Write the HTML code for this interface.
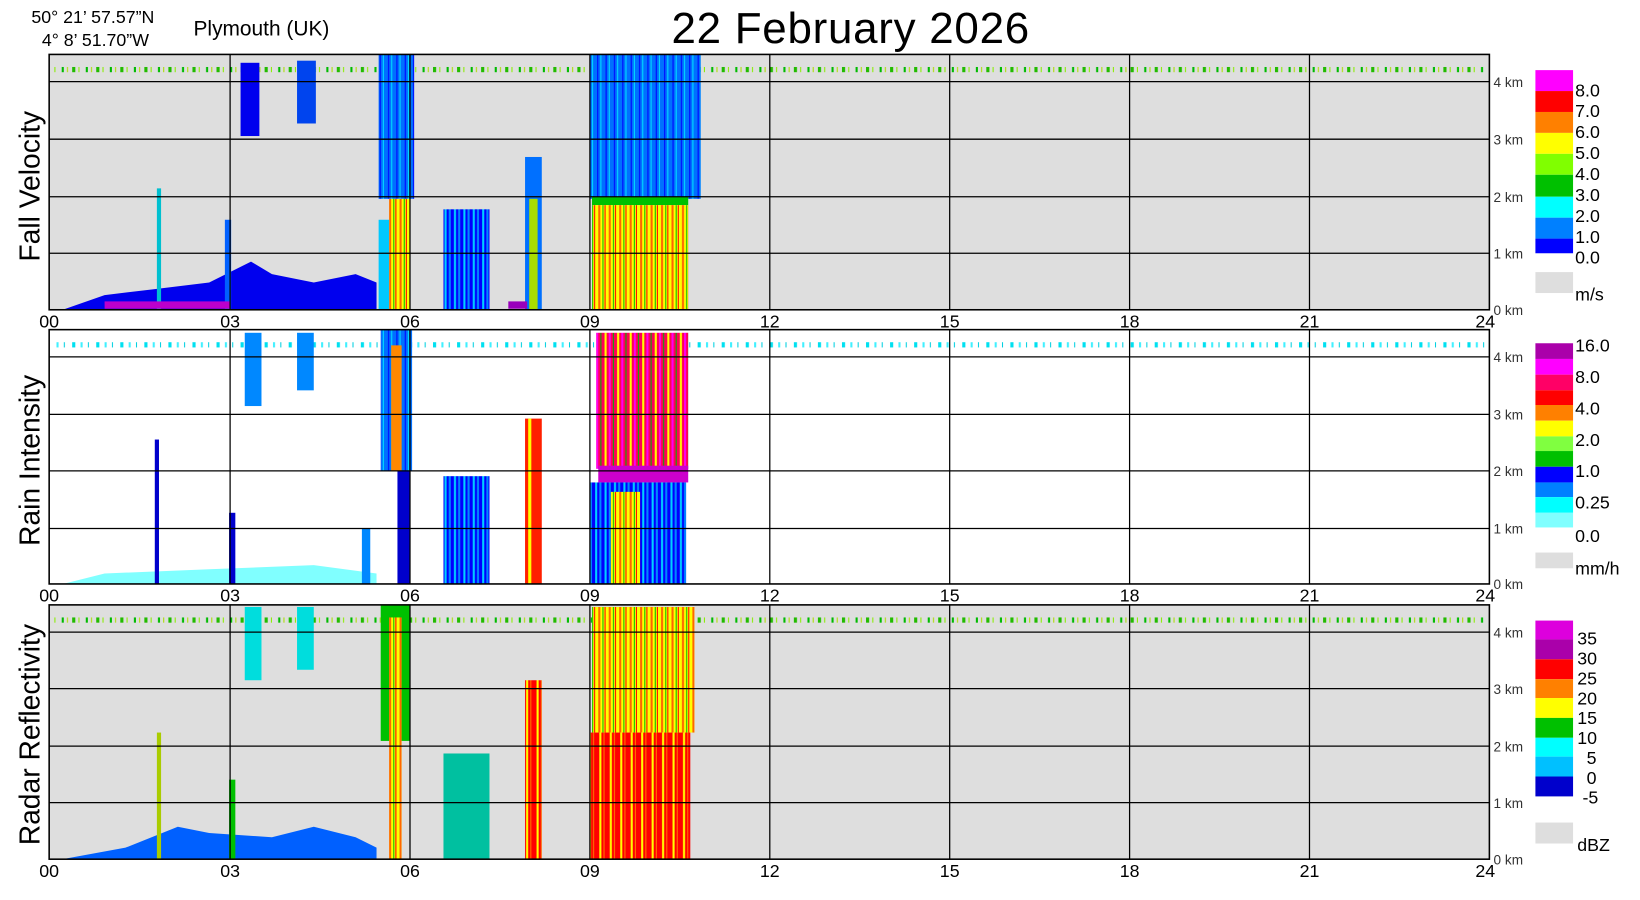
<!DOCTYPE html>
<html><head><meta charset="utf-8"><style>
html,body{margin:0;padding:0;background:#fff;width:1640px;height:900px;overflow:hidden}
svg{display:block}
text{font-family:"Liberation Sans",Arial,sans-serif}
</style></head><body>
<svg width="1640" height="900" viewBox="0 0 1568 860" preserveAspectRatio="none">
<defs>
<pattern id="g1" width="23" height="4" patternUnits="userSpaceOnUse"><rect x="0" y="0" width="3" height="4" fill="#22bb00"/><rect x="6" y="0" width="1" height="4" fill="#88ee00"/><rect x="13" y="0" width="2" height="4" fill="#00bb00"/><rect x="18" y="0" width="1" height="4" fill="#aadd00"/></pattern>
<pattern id="c1" width="23" height="4" patternUnits="userSpaceOnUse"><rect x="0" y="0" width="3" height="4" fill="#00e0f0"/><rect x="8" y="0" width="2" height="4" fill="#40f0ff"/><rect x="15" y="0" width="1" height="4" fill="#00d0e0"/></pattern>
<pattern id="yr" width="10" height="100" patternUnits="userSpaceOnUse"><rect width="10" height="100" fill="#ffff00"/><rect x="2" width="2" height="100" fill="#ff6600"/><rect x="6" width="1" height="100" fill="#00c000"/><rect x="8" width="1" height="100" fill="#ff0000"/></pattern>
<pattern id="rr" width="10" height="100" patternUnits="userSpaceOnUse"><rect width="10" height="100" fill="#ff0000"/><rect x="3" width="2" height="100" fill="#ffff00"/><rect x="7" width="1" height="100" fill="#ff7700"/></pattern>
<pattern id="ri" width="12" height="100" patternUnits="userSpaceOnUse"><rect width="12" height="100" fill="#ff0055"/><rect x="2" width="2" height="100" fill="#ffff00"/><rect x="6" width="2" height="100" fill="#ff00ee"/><rect x="10" width="1" height="100" fill="#00b000"/></pattern>
<pattern id="bl" width="8" height="100" patternUnits="userSpaceOnUse"><rect width="8" height="100" fill="#0070ff"/><rect x="3" width="1" height="100" fill="#0000ff"/><rect x="6" width="1" height="100" fill="#00e0ff"/></pattern>
<pattern id="bc" width="9" height="100" patternUnits="userSpaceOnUse"><rect width="9" height="100" fill="#0000ff"/><rect x="2" width="2" height="100" fill="#00d0ff"/><rect x="6" width="2" height="100" fill="#0088ff"/></pattern>
</defs>

<!-- header -->
<text x="30" y="22" font-size="17">50° 21’ 57.57”N</text>
<text x="40" y="44" font-size="17">4°  8’ 51.70”W</text>
<text x="185" y="34" font-size="20">Plymouth (UK)</text>
<text x="642" y="41" font-size="42" textLength="342">22 February  2026</text>

<!-- PANEL 1 -->
<g>
<rect x="47" y="52" width="1377" height="244" fill="#dedede"/>
<rect x="50" y="64" width="1370" height="5" fill="url(#g1)"/>
<rect x="230" y="60" width="18" height="70" fill="#0000ee"/>
<rect x="284" y="58" width="18" height="60" fill="#0044ee"/>
<rect x="362" y="52" width="34" height="138" fill="url(#bl)"/>
<rect x="372" y="190" width="20" height="106" fill="url(#yr)"/>
<rect x="362" y="210" width="10" height="86" fill="#00c8ff"/>
<polygon points="60,296 100,282 150,276 200,270 240,250 260,262 300,270 340,262 360,270 360,296" fill="#0000ee"/>
<rect x="150" y="180" width="4" height="116" fill="#00c0d0"/>
<rect x="215" y="210" width="6" height="86" fill="#0060ff"/>
<rect x="424" y="200" width="44" height="96" fill="url(#bc)"/>
<rect x="502" y="150" width="16" height="146" fill="#0070ff"/>
<rect x="506" y="190" width="8" height="106" fill="#aadd00"/>
<rect x="564" y="52" width="106" height="138" fill="url(#bl)"/>
<rect x="566" y="188" width="92" height="8" fill="#00c000"/>
<rect x="566" y="196" width="92" height="100" fill="url(#yr)"/>
<rect x="100" y="288" width="120" height="7" fill="#bb00cc"/>
<rect x="486" y="288" width="18" height="7" fill="#9900bb"/>
<g stroke="#000" stroke-width="1.2"><line x1="47" y1="78" x2="1424" y2="78"/><line x1="47" y1="133" x2="1424" y2="133"/><line x1="47" y1="188" x2="1424" y2="188"/><line x1="47" y1="242" x2="1424" y2="242"/>
<line x1="220" y1="52" x2="220" y2="296"/><line x1="392" y1="52" x2="392" y2="296"/><line x1="564" y1="52" x2="564" y2="296"/><line x1="736" y1="52" x2="736" y2="296"/><line x1="908" y1="52" x2="908" y2="296"/><line x1="1080" y1="52" x2="1080" y2="296"/><line x1="1252" y1="52" x2="1252" y2="296"/></g>
<rect x="47" y="52" width="1377" height="244" fill="none" stroke="#000" stroke-width="1.5"/>
<text transform="translate(38,178) rotate(-90)" font-size="27" text-anchor="middle">Fall Velocity</text>
</g>

<!-- PANEL 2 -->
<g>
<rect x="47" y="315" width="1377" height="243" fill="#fff"/>
<rect x="50" y="327" width="1370" height="5" fill="url(#c1)"/>
<rect x="234" y="318" width="16" height="70" fill="#0088ff"/>
<rect x="284" y="318" width="16" height="55" fill="#0088ff"/>
<rect x="364" y="315" width="30" height="135" fill="url(#bl)"/>
<rect x="374" y="330" width="10" height="120" fill="#ff8800"/>
<rect x="380" y="450" width="12" height="108" fill="#0000cc"/>
<polygon points="60,558 100,548 200,544 300,540 360,548 360,558" fill="#80ffff"/>
<rect x="148" y="420" width="4" height="138" fill="#0000cc"/>
<rect x="219" y="490" width="6" height="68" fill="#0000cc"/>
<rect x="346" y="505" width="8" height="53" fill="#0088ff"/>
<rect x="424" y="455" width="44" height="103" fill="url(#bc)"/>
<rect x="502" y="400" width="16" height="158" fill="#ff2000"/>
<rect x="505" y="400" width="3" height="158" fill="#ffff00"/>
<rect x="570" y="318" width="88" height="130" fill="url(#ri)"/>
<rect x="572" y="445" width="86" height="16" fill="#cc00cc"/>
<rect x="564" y="461" width="92" height="97" fill="url(#bc)"/>
<rect x="584" y="470" width="28" height="88" fill="url(#yr)"/>
<g stroke="#000" stroke-width="1.2"><line x1="47" y1="341" x2="1424" y2="341"/><line x1="47" y1="396" x2="1424" y2="396"/><line x1="47" y1="450" x2="1424" y2="450"/><line x1="47" y1="505" x2="1424" y2="505"/>
<line x1="220" y1="315" x2="220" y2="558"/><line x1="392" y1="315" x2="392" y2="558"/><line x1="564" y1="315" x2="564" y2="558"/><line x1="736" y1="315" x2="736" y2="558"/><line x1="908" y1="315" x2="908" y2="558"/><line x1="1080" y1="315" x2="1080" y2="558"/><line x1="1252" y1="315" x2="1252" y2="558"/></g>
<rect x="47" y="315" width="1377" height="243" fill="none" stroke="#000" stroke-width="1.5"/>
<text transform="translate(38,440) rotate(-90)" font-size="27" text-anchor="middle">Rain Intensity</text>
</g>

<!-- PANEL 3 -->
<g>
<rect x="47" y="578" width="1377" height="243" fill="#dedede"/>
<rect x="50" y="590" width="1370" height="5" fill="url(#g1)"/>
<rect x="234" y="580" width="16" height="70" fill="#00dddd"/>
<rect x="284" y="580" width="16" height="60" fill="#00dddd"/>
<rect x="364" y="578" width="28" height="130" fill="#00c000"/>
<rect x="372" y="590" width="12" height="231" fill="url(#yr)"/>
<polygon points="60,821 120,810 170,790 200,796 260,800 300,790 340,800 360,810 360,821" fill="#0060ff"/>
<rect x="150" y="700" width="4" height="121" fill="#aacc00"/>
<rect x="219" y="745" width="6" height="76" fill="#00c000"/>
<rect x="424" y="720" width="44" height="101" fill="#00c0a0"/>
<rect x="502" y="650" width="16" height="171" fill="url(#rr)"/>
<rect x="566" y="580" width="98" height="120" fill="url(#yr)"/>
<rect x="564" y="700" width="96" height="121" fill="url(#rr)"/>
<g stroke="#000" stroke-width="1.2"><line x1="47" y1="604" x2="1424" y2="604"/><line x1="47" y1="658" x2="1424" y2="658"/><line x1="47" y1="713" x2="1424" y2="713"/><line x1="47" y1="767" x2="1424" y2="767"/>
<line x1="220" y1="578" x2="220" y2="821"/><line x1="392" y1="578" x2="392" y2="821"/><line x1="564" y1="578" x2="564" y2="821"/><line x1="736" y1="578" x2="736" y2="821"/><line x1="908" y1="578" x2="908" y2="821"/><line x1="1080" y1="578" x2="1080" y2="821"/><line x1="1252" y1="578" x2="1252" y2="821"/></g>
<rect x="47" y="578" width="1377" height="243" fill="none" stroke="#000" stroke-width="1.5"/>
<text transform="translate(38,702) rotate(-90)" font-size="27" text-anchor="middle">Radar Reflectivity</text>
</g>

<!-- x tick labels -->
<g font-size="17" text-anchor="middle">
<text x="47" y="313">00</text><text x="220" y="313">03</text><text x="392" y="313">06</text><text x="564" y="313">09</text><text x="736" y="313">12</text><text x="908" y="313">15</text><text x="1080" y="313">18</text><text x="1252" y="313">21</text><text x="1420" y="313">24</text>
<text x="47" y="575">00</text><text x="220" y="575">03</text><text x="392" y="575">06</text><text x="564" y="575">09</text><text x="736" y="575">12</text><text x="908" y="575">15</text><text x="1080" y="575">18</text><text x="1252" y="575">21</text><text x="1420" y="575">24</text>
<text x="47" y="838">00</text><text x="220" y="838">03</text><text x="392" y="838">06</text><text x="564" y="838">09</text><text x="736" y="838">12</text><text x="908" y="838">15</text><text x="1080" y="838">18</text><text x="1252" y="838">21</text><text x="1420" y="838">24</text>
</g>
<!-- km labels -->
<g font-size="13" fill="#333">
<text x="1428" y="83">4 km</text><text x="1428" y="138">3 km</text><text x="1428" y="193">2 km</text><text x="1428" y="247">1 km</text><text x="1428" y="301">0 km</text>
<text x="1428" y="346">4 km</text><text x="1428" y="401">3 km</text><text x="1428" y="455">2 km</text><text x="1428" y="510">1 km</text><text x="1428" y="563">0 km</text>
<text x="1428" y="609">4 km</text><text x="1428" y="663">3 km</text><text x="1428" y="718">2 km</text><text x="1428" y="772">1 km</text><text x="1428" y="826">0 km</text>
</g>

<!-- legend 1 -->
<g>
<rect x="1468" y="67" width="36" height="20" fill="#ff00ff"/><rect x="1468" y="87" width="36" height="20" fill="#ff0000"/><rect x="1468" y="107" width="36" height="20" fill="#ff8000"/><rect x="1468" y="127" width="36" height="20" fill="#ffff00"/><rect x="1468" y="147" width="36" height="20" fill="#80ff00"/><rect x="1468" y="167" width="36" height="21" fill="#00c000"/><rect x="1468" y="188" width="36" height="20" fill="#00ffff"/><rect x="1468" y="208" width="36" height="20" fill="#0080ff"/><rect x="1468" y="228" width="36" height="14" fill="#0000ff"/>
<rect x="1468" y="260" width="36" height="20" fill="#dedede"/>
<g font-size="17"><text x="1506" y="92">8.0</text><text x="1506" y="112">7.0</text><text x="1506" y="132">6.0</text><text x="1506" y="152">5.0</text><text x="1506" y="172">4.0</text><text x="1506" y="192">3.0</text><text x="1506" y="212">2.0</text><text x="1506" y="232">1.0</text><text x="1506" y="252">0.0</text><text x="1506" y="287">m/s</text></g>
</g>
<!-- legend 2 -->
<g>
<rect x="1468" y="328" width="36" height="15" fill="#aa00aa"/><rect x="1468" y="343" width="36" height="15" fill="#ff00ff"/><rect x="1468" y="358" width="36" height="15" fill="#ff0066"/><rect x="1468" y="373" width="36" height="14" fill="#ff0000"/><rect x="1468" y="387" width="36" height="15" fill="#ff8000"/><rect x="1468" y="402" width="36" height="15" fill="#ffff00"/><rect x="1468" y="417" width="36" height="14" fill="#80ff40"/><rect x="1468" y="431" width="36" height="15" fill="#00c000"/><rect x="1468" y="446" width="36" height="15" fill="#0000ff"/><rect x="1468" y="461" width="36" height="14" fill="#0080ff"/><rect x="1468" y="475" width="36" height="15" fill="#00ffff"/><rect x="1468" y="490" width="36" height="14" fill="#80ffff"/>
<rect x="1468" y="528" width="36" height="15" fill="#dedede"/>
<g font-size="17"><text x="1506" y="336">16.0</text><text x="1506" y="366">8.0</text><text x="1506" y="396">4.0</text><text x="1506" y="426">2.0</text><text x="1506" y="456">1.0</text><text x="1506" y="486">0.25</text><text x="1506" y="518">0.0</text><text x="1506" y="549">mm/h</text></g>
</g>
<!-- legend 3 -->
<g>
<rect x="1468" y="593" width="36" height="18" fill="#dd00dd"/><rect x="1468" y="611" width="36" height="19" fill="#aa00aa"/><rect x="1468" y="630" width="36" height="19" fill="#ff0000"/><rect x="1468" y="649" width="36" height="18" fill="#ff8000"/><rect x="1468" y="667" width="36" height="19" fill="#ffff00"/><rect x="1468" y="686" width="36" height="19" fill="#00c000"/><rect x="1468" y="705" width="36" height="18" fill="#00ffff"/><rect x="1468" y="723" width="36" height="19" fill="#00c0ff"/><rect x="1468" y="742" width="36" height="19" fill="#0000cc"/>
<rect x="1468" y="786" width="36" height="20" fill="#dedede"/>
<g font-size="17"><text x="1508" y="616">35</text><text x="1508" y="635">30</text><text x="1508" y="654">25</text><text x="1508" y="673">20</text><text x="1508" y="692">15</text><text x="1508" y="711">10</text><text x="1517" y="730">5</text><text x="1517" y="749">0</text><text x="1513" y="768">-5</text><text x="1508" y="813">dBZ</text></g>
</g>
</svg>
</body></html>
